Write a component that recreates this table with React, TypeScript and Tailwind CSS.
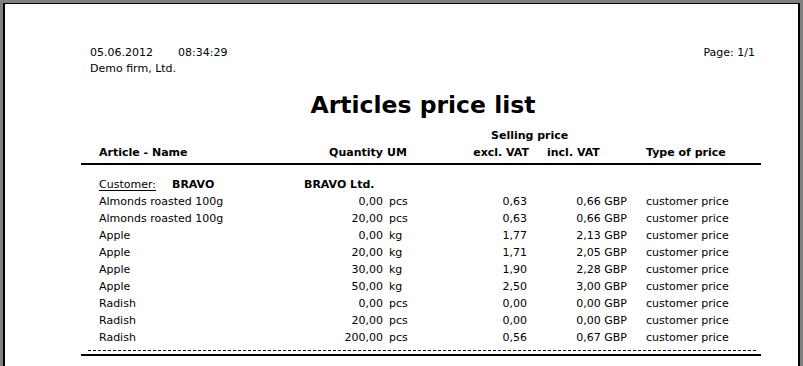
import React from "react";

const rows: [string, string, string, string, string][] = [
  ["Almonds roasted 100g", "0,00", "pcs", "0,63", "0,66 GBP"],
  ["Almonds roasted 100g", "20,00", "pcs", "0,63", "0,66 GBP"],
  ["Apple", "0,00", "kg", "1,77", "2,13 GBP"],
  ["Apple", "20,00", "kg", "1,71", "2,05 GBP"],
  ["Apple", "30,00", "kg", "1,90", "2,28 GBP"],
  ["Apple", "50,00", "kg", "2,50", "3,00 GBP"],
  ["Radish", "0,00", "pcs", "0,00", "0,00 GBP"],
  ["Radish", "20,00", "pcs", "0,00", "0,00 GBP"],
  ["Radish", "200,00", "pcs", "0,56", "0,67 GBP"],
];

export default function App() {
  return (
    <div className="w-[803px] h-[366px] overflow-hidden bg-[#808080] pl-[3px] pt-[3px] font-['DejaVu_Sans',sans-serif] text-black">
      <div className="w-[797px] h-[363px] bg-white border-t border-l-2 border-r-2 border-black pt-[41px] pl-[76px]">
        <div className="w-[680px]">
          <div className="flex justify-between pl-[9px] pr-[6px] text-[11px] leading-[16px]">
            <div>
              <div>
                <span>05.06.2012</span>
                <span className="ml-[25px]">08:34:29</span>
              </div>
              <div>Demo firm, Ltd.</div>
            </div>
            <div>Page: 1/1</div>
          </div>

          <div className="mt-[16px] pl-[4px] text-center text-[23.5px] leading-[24px] font-bold">
            Articles price list
          </div>

          <div className="mt-[10px] h-[17px] leading-[17px] text-[11px] font-bold pl-[410px]">
            Selling price
          </div>

          <div className="flex h-[17px] leading-[17px] text-[11px] font-bold pl-[18px] whitespace-nowrap">
            <div className="w-[220px]">Article - Name</div>
            <div className="w-[64px] text-right">Quantity</div>
            <div className="w-[66px] pl-[4px]">UM</div>
            <div className="w-[80px] text-right">excl. VAT</div>
            <div className="ml-[18px] w-[99px]">incl. VAT</div>
            <div>Type of price</div>
          </div>

          <div className="mt-[2px] h-[2px] bg-black" />

          <div className="mt-[11px] flex h-[17px] leading-[17px] text-[11px] pl-[18px] whitespace-nowrap">
            <div className="w-[73px] underline underline-offset-2">Customer:</div>
            <div className="w-[132px] font-bold">BRAVO</div>
            <div className="font-bold">BRAVO Ltd.</div>
          </div>

          {rows.map((r, i) => (
            <div
              key={i}
              className="flex h-[17px] leading-[17px] text-[11px] pl-[18px] whitespace-nowrap"
            >
              <div className="w-[220px]">{r[0]}</div>
              <div className="w-[64px] text-right">{r[1]}</div>
              <div className="w-[60px] pl-[6px]">{r[2]}</div>
              <div className="w-[84px] text-right">{r[3]}</div>
              <div className="w-[100px] text-right">{r[4]}</div>
              <div className="pl-[19px]">customer price</div>
            </div>
          ))}

          <svg className="block mt-[4px] ml-[7px]" width="669" height="1">
            <line x1="0" y1="0.5" x2="669" y2="0.5" stroke="black" strokeWidth="1" strokeDasharray="3 2" />
          </svg>
          <div className="mt-[3px] h-[2px] bg-black" />
        </div>
      </div>
    </div>
  );
}
